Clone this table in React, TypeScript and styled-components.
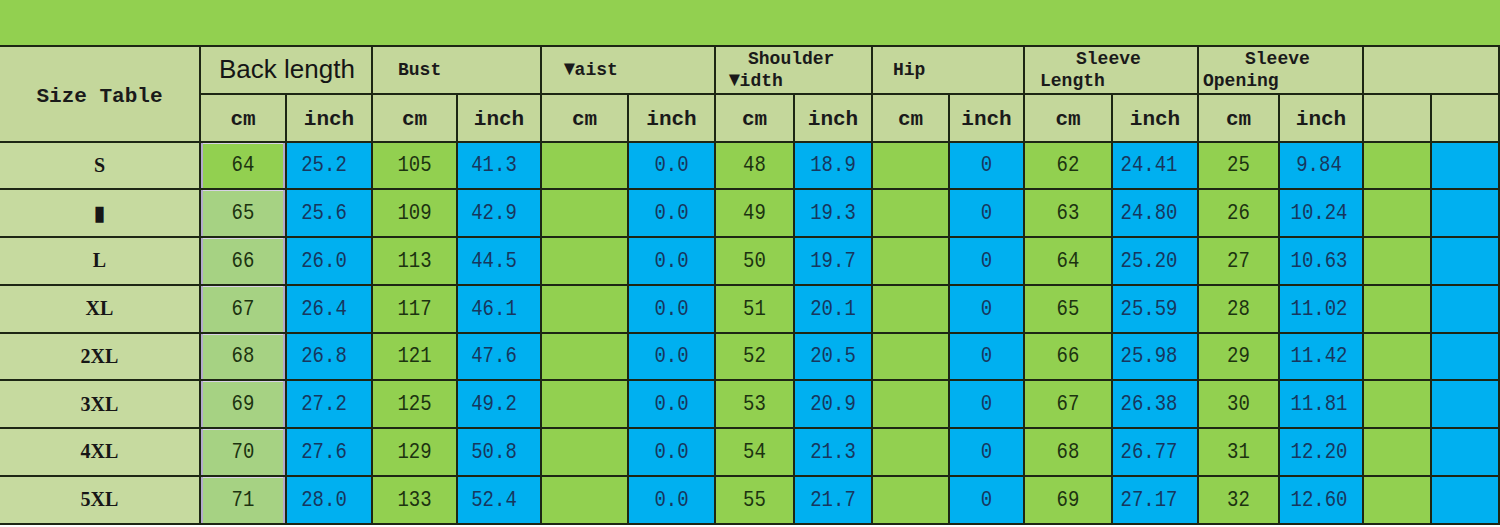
import styled, { createGlobalStyle } from 'styled-components'

const GlobalStyle = createGlobalStyle`
  html, body {
    margin: 0;
    padding: 0;
    background: #ffffff;
  }
`

const GREEN = '#92d050'
const BLUE = '#00b0f0'
const HEAD = '#c4d79b'
const LINE = '#1d2614'

const colWidths = [201, 86, 86, 85, 84, 87, 87, 79, 78, 77, 75, 88, 86, 81, 84, 68, 68]

const Sheet = styled.div`
  display: grid;
  width: 1500px;
  grid-template-columns: ${colWidths.map((w) => `${w}px`).join(' ')};
  grid-template-rows: 47px repeat(10, 47.75px);
  font-family: 'Liberation Mono', 'DejaVu Sans Mono', monospace;
`

const Band = styled.div`
  grid-column: 1 / -1;
  background: ${GREEN};
  border-bottom: 2px solid ${LINE};
`

const Cell = styled.div<{ $bg: string; $span?: number; $rows?: number; $selected?: boolean }>`
  box-sizing: border-box;
  display: flex;
  align-items: center;
  justify-content: center;
  background: ${(p) => p.$bg};
  border-right: 2px solid ${LINE};
  border-bottom: 2px solid ${LINE};
  grid-column: span ${(p) => p.$span ?? 1};
  grid-row: span ${(p) => p.$rows ?? 1};
  box-shadow: ${(p) =>
    p.$selected ? 'inset 2px 0 0 #b3abcc, inset -2px 0 0 #b3abcc, inset 0 1px 0 #d8d2e6' : 'none'};
  overflow: hidden;
`

const TitleText = styled.span`
  font-weight: bold;
  font-size: 21px;
  color: #1a1a1a;
  padding-top: 5px;
`

const BackLength = styled.span`
  font-family: 'Liberation Sans', Arial, sans-serif;
  font-size: 26px;
  color: #151515;
  padding-left: 18px;
  align-self: center;
  margin-right: auto;
  white-space: nowrap;
`

const GroupLabel = styled.div`
  display: flex;
  flex-direction: column;
  align-self: center;
  margin-right: auto;
  font-weight: bold;
  font-size: 18px;
  line-height: 22px;
  color: #1a1a1a;
  white-space: nowrap;
`

const GroupLine = styled.span<{ $indent: number }>`
  padding-left: ${(p) => p.$indent}px;
`

// the broken "W" glyph of the original sheet, drawn as a heavy block
const BrokenW = styled.span`
  display: inline-block;
  font-size: 21px;
  line-height: 18px;
  transform: scaleX(0.9);
  margin-right: -1px;
`

const UnitText = styled.span`
  font-weight: bold;
  font-size: 21px;
  color: #1a1a1a;
  padding-top: 4px;
`

const SizeText = styled.span`
  font-family: 'Liberation Serif', 'Times New Roman', serif;
  font-weight: bold;
  font-size: 20px;
  color: #161616;
`

const Value = styled.span<{ $blue: boolean; $shift: number }>`
  font-size: 19px;
  color: ${(p) => (p.$blue ? '#17375e' : '#1c3310')};
  margin-right: ${(p) => p.$shift}px;
  transform: scaleY(1.15);
`

type Line = { text: string; indent: number; broken?: boolean }
type Group = { lines: Line[] }

const groups: Group[] = [
  { lines: [{ text: 'Bust', indent: 25 }] },
  { lines: [{ text: 'aist', indent: 21, broken: true }] },
  {
    lines: [
      { text: 'Shoulder', indent: 32 },
      { text: 'idth', indent: 12, broken: true },
    ],
  },
  { lines: [{ text: 'Hip', indent: 20 }] },
  {
    lines: [
      { text: 'Sleeve', indent: 51 },
      { text: 'Length', indent: 15 },
    ],
  },
  {
    lines: [
      { text: 'Sleeve', indent: 46 },
      { text: 'Opening', indent: 4 },
    ],
  },
]

const rows: [string, string[]][] = [
  ['S', ['64', '25.2', '105', '41.3', '', '0.0', '48', '18.9', '', '0', '62', '24.41', '25', '9.84', '', '']],
  ['▮', ['65', '25.6', '109', '42.9', '', '0.0', '49', '19.3', '', '0', '63', '24.80', '26', '10.24', '', '']],
  ['L', ['66', '26.0', '113', '44.5', '', '0.0', '50', '19.7', '', '0', '64', '25.20', '27', '10.63', '', '']],
  ['XL', ['67', '26.4', '117', '46.1', '', '0.0', '51', '20.1', '', '0', '65', '25.59', '28', '11.02', '', '']],
  ['2XL', ['68', '26.8', '121', '47.6', '', '0.0', '52', '20.5', '', '0', '66', '25.98', '29', '11.42', '', '']],
  ['3XL', ['69', '27.2', '125', '49.2', '', '0.0', '53', '20.9', '', '0', '67', '26.38', '30', '11.81', '', '']],
  ['4XL', ['70', '27.6', '129', '50.8', '', '0.0', '54', '21.3', '', '0', '68', '26.77', '31', '12.20', '', '']],
  ['5XL', ['71', '28.0', '133', '52.4', '', '0.0', '55', '21.7', '', '0', '69', '27.17', '32', '12.60', '', '']],
]

function cellColor(col: number, row: number) {
  if (col === 0) return row === 0 ? GREEN : '#a6d283'
  return col % 2 === 0 ? GREEN : BLUE
}

// inch values in a few columns sit a bit left of centre
const shifts = [0, 10, 0, 10, 0, 0, 0, 0, 0, 0, 0, 12, 0, 4, 0, 0]

function App() {
  return (
    <>
      <GlobalStyle />
      <Sheet>
        <Band />
        <Cell $bg={HEAD} $rows={2}>
          <TitleText>Size Table</TitleText>
        </Cell>
        <Cell $bg={HEAD} $span={2}>
          <BackLength>Back length</BackLength>
        </Cell>
        {groups.map((g, i) => (
          <Cell key={i} $bg={HEAD} $span={2}>
            <GroupLabel>
              {g.lines.map((l, j) => (
                <GroupLine key={j} $indent={l.indent}>
                  {l.broken && <BrokenW>▼</BrokenW>}
                  {l.text}
                </GroupLine>
              ))}
            </GroupLabel>
          </Cell>
        ))}
        <Cell $bg={HEAD} $span={2} />
        {Array.from({ length: 16 }).map((_, i) => (
          <Cell key={i} $bg={HEAD}>
            {i < 14 && <UnitText>{i % 2 === 0 ? 'cm' : 'inch'}</UnitText>}
          </Cell>
        ))}
        {rows.map(([size, values], r) => (
          <>
            <Cell key={`s${r}`} $bg="#c6da9f">
              <SizeText>{size}</SizeText>
            </Cell>
            {values.map((v, c) => (
              <Cell key={`${r}-${c}`} $bg={cellColor(c, r)} $selected={c === 0}>
                {v && (
                  <Value $blue={c % 2 === 1} $shift={shifts[c]}>
                    {v}
                  </Value>
                )}
              </Cell>
            ))}
          </>
        ))}
      </Sheet>
    </>
  )
}

export default App
